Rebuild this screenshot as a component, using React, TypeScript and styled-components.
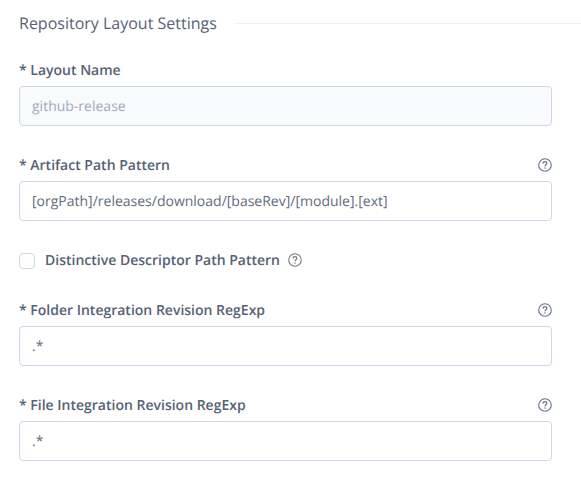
import React from 'react';
import styled, { createGlobalStyle } from 'styled-components';

const Global = createGlobalStyle`
  * { box-sizing: border-box; }
  body {
    margin: 0; background: #fff; color: #556274; overflow: hidden;
    font-family: "Open Sans", sans-serif; text-rendering: geometricPrecision;
  }
`;
const Page = styled.main`
  width: 581px; height: 482px; padding: 10px 0 0 19px; overflow: hidden;
`;
const Heading = styled.header`
  display: flex; align-items: center; gap: 17px; height: 26px;
  &::after { content: ""; flex: 1; height: 1px; background: #eff1f4; }
`;
const Title = styled.h1`
  margin: 0; font-size: 16px; font-weight: 400; line-height: 26px; white-space: nowrap;
`;
const Field = styled.section<{ $top: number }>`
  width: 533px; margin-top: ${p => p.$top}px;
`;
const LabelRow = styled.div`
  display: flex; align-items: center; justify-content: space-between; height: 20px; margin-bottom: 6px;
`;
const Label = styled.label`
  padding-top: 2px; font-size: 14px; font-weight: 600; line-height: 20px; white-space: nowrap;
`;
const Input = styled.input`
  display: block; width: 100%; height: 40px; padding: 1px 12px 0;
  border: 1px solid #d0d6e9; border-radius: 4px; background: #fff;
  font: 400 14px "Open Sans", sans-serif; color: #606c7d; outline: none;
  text-rendering: geometricPrecision;
  &:disabled { background: #f8fafc; color: #a6a9bf; }
`;
const CheckRow = styled.div`
  display: flex; align-items: center; height: 20px; margin-top: 29px;
`;
const Checkbox = styled.input`
  appearance: none; width: 16px; height: 16px; margin: 2px 10px 0 0;
  border: 1px solid #d0d6e9; border-radius: 4px; background: #fff;
`;
const HelpIcon = styled.svg`
  width: 14px; height: 14px; display: block; flex: none; color: #667284;
`;
const CheckHelp = styled.span`
  margin-left: 8px;
  ${HelpIcon} { color: #7c7c7c; }
`;

const Help = () => (
  <HelpIcon viewBox="0 0 14 14" fill="none" stroke="currentColor" strokeWidth="1.1">
    <circle cx="7" cy="7" r="6.3" />
    <path strokeWidth="1.25" d="M5.1 5.5C5.1 4.3 5.8 3.7 7 3.7S8.9 4.3 8.9 5.3C8.9 6.7 7 6.7 7 8.3" />
    <circle cx="7" cy="10" r=".75" fill="currentColor" stroke="none" />
  </HelpIcon>
);

interface TextFieldProps { id: string; label: string; value: string; top: number; disabled?: boolean; help?: boolean }
const TextField = ({ id, label, value, top, disabled, help }: TextFieldProps) => (
  <Field $top={top}>
    <LabelRow><Label htmlFor={id}>* {label}</Label>{help && <Help />}</LabelRow>
    <Input id={id} defaultValue={value} disabled={disabled} spellCheck={false} />
  </Field>
);

export default function App() {
  return (
    <>
      <Global />
      <Page>
        <Heading><Title>Repository Layout Settings</Title></Heading>
        <TextField id="name" label="Layout Name" value="github-release" top={24} disabled />
        <TextField id="path" label="Artifact Path Pattern" value="[orgPath]/releases/download/[baseRev]/[module].[ext]" top={29} help />
        <CheckRow>
          <Checkbox id="distinctive" type="checkbox" />
          <Label htmlFor="distinctive">Distinctive Descriptor Path Pattern</Label>
          <CheckHelp><Help /></CheckHelp>
        </CheckRow>
        <TextField id="folder" label="Folder Integration Revision RegExp" value=".*" top={30} help />
        <TextField id="file" label="File Integration Revision RegExp" value=".*" top={29} help />
      </Page>
    </>
  );
}
